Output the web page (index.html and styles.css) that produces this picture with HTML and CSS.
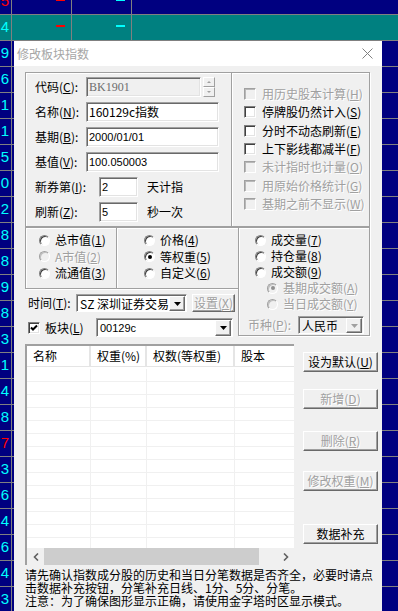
FILE: index.html
```html
<!DOCTYPE html>
<html lang="zh-CN">
<head>
<meta charset="utf-8">
<title>修改板块指数</title>
<link rel="stylesheet" href="styles.css">
</head>
<body>
<div class="grid">
  <div class="row first"><div class="cell n0 red">5</div><div class="cell dc"><i class="dash r"></i></div><div class="cell dc"><i class="dash c"></i></div><div class="cell last"></div></div>
  <div class="row teal"><div class="cell n0">4</div><div class="cell dc"><i class="dash r"></i></div><div class="cell dc"><i class="dash c"></i></div><div class="cell last"></div></div>
  <div class="row"><div class="cell n0">9</div><div class="cell"></div><div class="cell"></div><div class="cell last"></div></div>
  <div class="row"><div class="cell n0">6</div><div class="cell"></div><div class="cell"></div><div class="cell last"></div></div>
  <div class="row"><div class="cell n0">1</div><div class="cell"></div><div class="cell"></div><div class="cell last"></div></div>
  <div class="row"><div class="cell n0">1</div><div class="cell"></div><div class="cell"></div><div class="cell last"></div></div>
  <div class="row"><div class="cell n0">5</div><div class="cell"></div><div class="cell"></div><div class="cell last"></div></div>
  <div class="row"><div class="cell n0">0</div><div class="cell"></div><div class="cell"></div><div class="cell last"></div></div>
  <div class="row"><div class="cell n0">2</div><div class="cell"></div><div class="cell"></div><div class="cell last"></div></div>
  <div class="row"><div class="cell n0">8</div><div class="cell"></div><div class="cell"></div><div class="cell last"></div></div>
  <div class="row"><div class="cell n0">8</div><div class="cell"></div><div class="cell"></div><div class="cell last"></div></div>
  <div class="row"><div class="cell n0">9</div><div class="cell"></div><div class="cell"></div><div class="cell last"></div></div>
  <div class="row"><div class="cell n0">8</div><div class="cell"></div><div class="cell"></div><div class="cell last"></div></div>
  <div class="row"><div class="cell n0">3</div><div class="cell"></div><div class="cell"></div><div class="cell last"></div></div>
  <div class="row"><div class="cell n0">1</div><div class="cell"></div><div class="cell"></div><div class="cell last"></div></div>
  <div class="row"><div class="cell n0">4</div><div class="cell"></div><div class="cell"></div><div class="cell last"></div></div>
  <div class="row"><div class="cell n0">8</div><div class="cell"></div><div class="cell"></div><div class="cell last"></div></div>
  <div class="row"><div class="cell n0 red">7</div><div class="cell"></div><div class="cell"></div><div class="cell last"></div></div>
  <div class="row"><div class="cell n0">3</div><div class="cell"></div><div class="cell"></div><div class="cell last"></div></div>
  <div class="row"><div class="cell n0">6</div><div class="cell"></div><div class="cell"></div><div class="cell last"></div></div>
  <div class="row"><div class="cell n0">4</div><div class="cell"></div><div class="cell"></div><div class="cell last"></div></div>
  <div class="row"><div class="cell n0">6</div><div class="cell"></div><div class="cell"></div><div class="cell last"></div></div>
  <div class="row"><div class="cell n0">4</div><div class="cell"></div><div class="cell"></div><div class="cell last"></div></div>
  <div class="row"><div class="cell n0">3</div><div class="cell"></div><div class="cell"></div><div class="cell last"></div></div>
</div>

<div class="dialog">
  <div class="titlebar">
    <span class="title">修改板块指数</span>
    <svg class="close" width="11" height="11" viewBox="0 0 11 11"><path d="M0.5 0.5 L10.5 10.5 M10.5 0.5 L0.5 10.5" stroke="#808080" stroke-width="1" fill="none"/></svg>
  </div>
  <div class="dbody">
    <div class="top">
      <div class="box boxA">
        <div class="frow"><span class="lbl">代码(<u>C</u>):</span><span class="inp w1 disinp serif">BK1901</span><span class="spin"><b class="up"></b><b class="dn"></b></span></div>
        <div class="frow"><span class="lbl">名称(<u>N</u>):</span><span class="inp w2">160129c指数</span></div>
        <div class="frow"><span class="lbl">基期(<u>B</u>):</span><span class="inp w2 num">2000/01/01</span></div>
        <div class="frow"><span class="lbl">基值(<u>V</u>):</span><span class="inp w2 num">100.050003</span></div>
        <div class="frow"><span class="lbl wide">新券第(<u>I</u>):</span><span class="inp w3 num">2</span><span class="unit">天计指</span></div>
        <div class="frow"><span class="lbl wide">刷新(<u>Z</u>):</span><span class="inp w3 num">5</span><span class="unit">秒一次</span></div>
      </div>
      <div class="box boxB">
        <div class="chk dis"><i class="cb"></i>用历史股本计算(<u>H</u>)</div>
        <div class="chk"><i class="cb"></i>停牌股仍然计入(<u>S</u>)</div>
        <div class="chk"><i class="cb"></i>分时不动态刷新(<u>E</u>)</div>
        <div class="chk"><i class="cb"></i>上下影线都减半(<u>F</u>)</div>
        <div class="chk dis"><i class="cb"></i>未计指时也计量(<u>O</u>)</div>
        <div class="chk dis"><i class="cb"></i>用原始价格统计(<u>G</u>)</div>
        <div class="chk dis"><i class="cb"></i>基期之前不显示(<u>W</u>)</div>
      </div>
    </div>

    <div class="mid">
      <div class="midleft">
        <div class="radios">
          <div class="box boxC">
            <div class="rad"><i class="ro"></i>总市值(<u>1</u>)</div>
            <div class="rad dis"><i class="ro"></i>A市值(<u>2</u>)</div>
            <div class="rad"><i class="ro"></i>流通值(<u>3</u>)</div>
          </div>
          <div class="box boxD">
            <div class="rad"><i class="ro"></i>价格(<u>4</u>)</div>
            <div class="rad"><i class="ro on"></i>等权重(<u>5</u>)</div>
            <div class="rad"><i class="ro"></i>自定义(<u>6</u>)</div>
          </div>
        </div>
        <div class="trow">
          <span class="lbl">时间(<u>T</u>):</span>
          <div class="combo tz"><span class="ctext">SZ 深圳证券交易</span><span class="carrow"><svg width="7" height="4" viewBox="0 0 7 4"><path d="M0 0H7L3.5 4Z" fill="#000"/></svg></span></div>
          <div class="btn set dis">设置(<u>X</u>)</div>
        </div>
        <div class="brow">
          <i class="cb on"><svg width="8" height="8" viewBox="0 0 8 8"><path d="M1 3.5 L3 5.5 L7 1.5" stroke="#000" stroke-width="2" fill="none"/></svg></i>
          <span class="lbl">板块(<u>L</u>)</span>
          <div class="combo blk"><span class="ctext num">00129c</span><span class="carrow"><svg width="7" height="4" viewBox="0 0 7 4"><path d="M0 0H7L3.5 4Z" fill="#000"/></svg></span></div>
        </div>
      </div>
      <div class="box boxE">
        <div class="rad"><i class="ro"></i>成交量(<u>7</u>)</div>
        <div class="rad"><i class="ro"></i>持仓量(<u>8</u>)</div>
        <div class="rad"><i class="ro"></i>成交额(<u>9</u>)</div>
        <div class="rad sub dis"><i class="ro on"></i>基期成交额(<u>A</u>)</div>
        <div class="rad sub dis"><i class="ro"></i>当日成交额(<u>Y</u>)</div>
        <div class="cur">
          <span class="lbl dis">币种(<u>P</u>):</span>
          <div class="combo cy disinp"><span class="ctext">人民币</span><span class="carrow"><svg width="7" height="4" viewBox="0 0 7 4"><path d="M0 0H7L3.5 4Z" fill="#a0a0a0"/></svg></span></div>
        </div>
      </div>
    </div>

    <div class="lower">
      <div class="list">
        <div class="lh"><span>名称</span><span>权重(%)</span><span>权数(等权重)</span><span class="lastc">股本</span></div>
        <div class="lb">
          <div class="lr"><i></i><i></i><i></i><i class="lastc"></i></div>
          <div class="lr"><i></i><i></i><i></i><i class="lastc"></i></div>
          <div class="lr"><i></i><i></i><i></i><i class="lastc"></i></div>
          <div class="lr"><i></i><i></i><i></i><i class="lastc"></i></div>
          <div class="lr"><i></i><i></i><i></i><i class="lastc"></i></div>
          <div class="lr"><i></i><i></i><i></i><i class="lastc"></i></div>
          <div class="lr"><i></i><i></i><i></i><i class="lastc"></i></div>
          <div class="lr"><i></i><i></i><i></i><i class="lastc"></i></div>
          <div class="lr"><i></i><i></i><i></i><i class="lastc"></i></div>
          <div class="lr"><i></i><i></i><i></i><i class="lastc"></i></div>
          <div class="lr"><i></i><i></i><i></i><i class="lastc"></i></div>
          <div class="lr"><i></i><i></i><i></i><i class="lastc"></i></div>
          <div class="lr"><i></i><i></i><i></i><i class="lastc"></i></div>
          <div class="lr"><i></i><i></i><i></i><i class="lastc"></i></div>
        </div>
        <div class="hs">
          <span class="arr"><svg width="6" height="8" viewBox="0 0 6 8"><path d="M5 0.5 L1.5 4 L5 7.5" stroke="#606060" stroke-width="1.6" fill="none"/></svg></span>
          <span class="thumb"></span>
          <span class="sp"></span>
          <span class="arr"><svg width="6" height="8" viewBox="0 0 6 8"><path d="M1 0.5 L4.5 4 L1 7.5" stroke="#606060" stroke-width="1.6" fill="none"/></svg></span>
        </div>
      </div>
      <div class="btns">
        <div class="btn b1">设为默认(<u>U</u>)</div>
        <div class="btn b2 dis">新增(<u>D</u>)</div>
        <div class="btn b3 dis">删除(<u>R</u>)</div>
        <div class="btn b4 dis">修改权重(<u>M</u>)</div>
        <div class="btn b5">数据补充</div>
      </div>
    </div>

    <div class="note">
      <div>请先确认指数成分股的历史和当日分笔数据是否齐全，必要时请点<br>击数据补充按钮，分笔补充日线、1分、5分、分笔。</div>
      <div class="l3">注意：为了确保图形显示正确，请使用金字塔时区显示模式。</div>
    </div>
  </div>
</div>
</body>
</html>
```

FILE: styles.css
```css
* { box-sizing: border-box; margin: 0; padding: 0; }
html, body { width: 398px; height: 611px; overflow: hidden; }
body {
  position: relative;
  background: #000080;
  font-family: "Noto Sans CJK SC", "Noto Sans", sans-serif;
  font-size: 12px;
  line-height: 14px;
  color: #000;
}
u { text-decoration: underline; text-underline-offset: 1px; }
i { font-style: normal; }

/* background quote grid */
.grid { display: flex; flex-direction: column; }
.row {
  flex: none;
  display: grid;
  grid-template-columns: 12px 60px 60px 1fr;
  height: 26px;
  border-bottom: 1px solid #808080;
}
.row.first { margin-top: -11px; }
.row.teal { background: #008080; }
.cell { border-right: 1px solid #808080; }
.cell.last { border-right: 0; }
.n0 {
  color: #00ffff;
  font-family: "Liberation Sans", sans-serif;
  font-size: 15px;
  line-height: 23px;
  text-align: right;
  padding-right: 2px;
  overflow: hidden;
}
.n0.red { color: #ff0000; }
.dc { display: flex; justify-content: flex-end; align-items: flex-start; padding: 10px 6px 0 0; }
.dash { display: block; width: 9px; height: 2px; }
.dash.r { background: #ff0000; }
.dash.c { background: #00ffff; }

/* dialog */
.dialog {
  position: absolute;
  left: 14px;
  top: 41px;
  width: 368px;
  height: 570px;
  background: #f0f0f0;
  display: flex;
  flex-direction: column;
}
.titlebar {
  flex: none;
  height: 25px;
  background: #fff;
  display: flex;
  align-items: center;
  padding: 0 9px 0 3px;
}
.title { color: #a6a6a6; font-family: "Noto Sans CJK SC", sans-serif; }
.close { margin-left: auto; }
.dbody { flex: 1; padding: 6px 0 0 11px; }

.box { border: 1px solid #a0a0a0; box-shadow: inset 1px 1px #fff, 1px 1px #fff; }
.top { display: flex; }
.boxA { width: 207px; height: 155px; padding: 4px 0 0 9px; }
.boxB { width: 139px; height: 155px; margin-left: -1px; padding: 12px 0 0 12px; }

.frow { display: flex; align-items: center; height: 20px; margin-bottom: 5px; white-space: nowrap; }
.lbl { flex: none; width: 51px; white-space: nowrap; }
.lbl.wide { width: 64px; }
.inp {
  flex: none;
  height: 20px;
  background: #fff;
  border: 1px solid;
  border-color: #a0a0a0 #fff #fff #a0a0a0;
  box-shadow: inset 1px 1px #696969, inset -1px -1px #e3e3e3;
  padding: 0 0 0 2px;
  display: flex;
  align-items: center;
  white-space: nowrap;
  overflow: hidden;
}
.w1 { width: 115px; }
.w2 { width: 133px; }
.w3 { width: 39px; }
.disinp { background: #f0f0f0; }
.serif { font-family: "Liberation Serif", serif; font-size: 12px; color: #6d6d6d; }
.num { font-family: "Liberation Sans", sans-serif; font-size: 11px; }
.unit { margin-left: 9px; }
.spin { flex: none; margin-left: 2px; width: 12px; height: 20px; display: flex; flex-direction: column; }
.spin b {
  flex: 1;
  background: #f0f0f0;
  border: 1px solid;
  border-color: #fff #a0a0a0 #a0a0a0 #fff;
  display: flex;
  align-items: center;
  justify-content: center;
}
.spin b::after { content: ""; border-left: 2px solid transparent; border-right: 2px solid transparent; }
.spin .up::after { border-bottom: 2px solid #a0a0a0; }
.spin .dn::after { border-top: 2px solid #a0a0a0; }

.dis { color: #a0a0a0; text-shadow: 1px 1px #fff; }

.chk { display: flex; align-items: center; height: 18.33px; white-space: nowrap; }
.chk .cb { margin-right: 6px; }
.cb {
  flex: none;
  width: 12px;
  height: 12px;
  background: #fff;
  border: 1px solid;
  border-color: #808080 #fff #fff #808080;
  box-shadow: inset 1px 1px #404040, inset -1px -1px #e3e3e3;
  display: flex;
  align-items: center;
  justify-content: center;
}
.dis .cb { background: #f0f0f0; border-color: #a0a0a0 #fff #fff #a0a0a0; box-shadow: inset 1px 1px #b8b8b8; }

/* middle */
.mid { display: flex; align-items: flex-start; }
.midleft { width: 214px; }
.radios { display: flex; }
.boxC { width: 92px; height: 62px; padding: 4px 0 0 13px; }
.boxD { width: 123px; height: 62px; margin-left: -1px; padding: 4px 0 0 27px; }
.boxE { width: 132px; height: 109px; margin-left: -1px; padding: 4px 0 0 16px; }
.rad { display: flex; align-items: center; height: 16.5px; white-space: nowrap; }
.boxE .rad { height: 16px; }
.rad .ro { margin-right: 5px; }
.rad.sub { padding-left: 12px; }
.ro {
  flex: none;
  width: 11px;
  height: 11px;
  border-radius: 50%;
  background: #fff;
  border: 1px solid;
  border-color: #808080 #fff #fff #808080;
  box-shadow: inset 1px 1px #404040;
  display: flex;
  align-items: center;
  justify-content: center;
}
.ro.on::after { content: ""; width: 4px; height: 4px; border-radius: 50%; background: #000; }
.dis .ro { background: #f0f0f0; border-color: #a0a0a0 #fff #fff #a0a0a0; box-shadow: inset 1px 1px #c0c0c0; }
.dis .ro.on::after { background: #909090; }

.cur { display: flex; align-items: center; margin: 4px 0 0 -7px; }
.cur .lbl { width: 50px; }

.combo {
  flex: none;
  display: flex;
  height: 18px;
  background: #fff;
  border: 1px solid;
  border-color: #a0a0a0 #fff #fff #a0a0a0;
  box-shadow: inset 1px 1px #696969;
  padding: 1px 1px 0 1px;
}
.ctext { flex: 1; padding-left: 2px; white-space: nowrap; overflow: hidden; display: flex; align-items: center; }
.carrow {
  flex: none;
  width: 16px;
  background: #f0f0f0;
  border: 1px solid;
  border-color: #fff #696969 #696969 #fff;
  box-shadow: inset -1px -1px #a0a0a0;
  display: flex;
  align-items: center;
  justify-content: center;
}
.combo.cy { width: 66px; background: #f0f0f0; }

.trow { display: flex; align-items: center; margin-top: 5px; padding-left: 3px; height: 18px; }
.trow .lbl { width: 48px; }
.combo.tz { width: 111px; }
.btn.set { margin-left: 5px; width: 43px; height: 18px; }

.brow { display: flex; align-items: center; margin-top: 6px; padding-left: 3px; height: 19px; }
.brow .cb { margin-right: 5px; }
.brow .lbl { width: 51px; }
.combo.blk { width: 137px; height: 19px; }

/* list & buttons */
.lower { display: flex; align-items: flex-start; margin-top: 7px; }
.list {
  flex: none;
  width: 269px;
  height: 221px;
  background: #fff;
  border-top: 2px solid #a0a0a0;
  border-left: 2px solid #a0a0a0;
  display: flex;
  flex-direction: column;
}
.lh { flex: none; display: grid; grid-template-columns: 64px 56px 88px 1fr; height: 21px; border-bottom: 1px solid #e5e5e5; }
.lh span { border-right: 2px solid #e5e5e5; padding-left: 6px; line-height: 20px; white-space: nowrap; overflow: hidden; }
.lh .lastc, .lr .lastc { border-right: 0; }
.lb { flex: 1; overflow: hidden; padding-top: 2px; }
.lr { display: grid; grid-template-columns: 64px 56px 88px 1fr; height: 13px; border-bottom: 1px solid #f0f0f0; }
.lr i { border-right: 1px solid #f0f0f0; }
.hs { flex: none; height: 17px; background: #f0f0f0; display: flex; }
.hs .arr { flex: none; width: 17px; display: flex; align-items: center; justify-content: center; }
.hs .thumb { flex: none; width: 215px; background: #cdcdcd; }
.hs .sp { flex: 1; }

.btns { flex: none; margin-left: 9px; width: 75px; display: flex; flex-direction: column; }
.btn {
  flex: none;
  height: 20px;
  background: #f0f0f0;
  border: 1px solid;
  border-color: #fff #696969 #696969 #fff;
  box-shadow: inset -1px -1px #a0a0a0;
  display: flex;
  align-items: center;
  justify-content: center;
  white-space: nowrap;
}
.b1 { margin-top: 8px; }
.b2 { margin-top: 17px; }
.b3 { margin-top: 22px; }
.b4 { margin-top: 20px; }
.b5 { margin-top: 33px; }

.note { margin-top: 3px; line-height: 13px; white-space: nowrap; }
.note .l3 { margin-top: 0; }
```
